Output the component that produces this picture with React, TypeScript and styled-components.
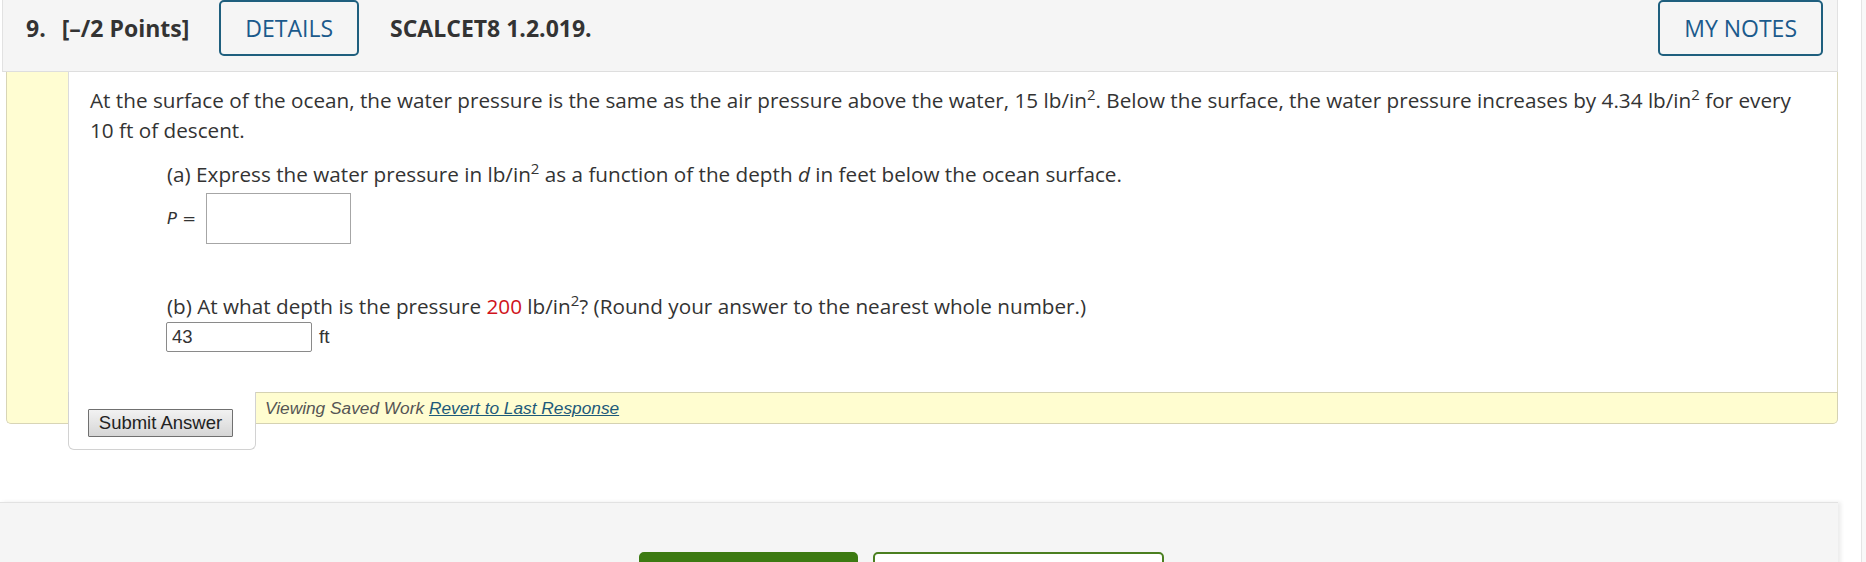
import React from "react";
import styled, { createGlobalStyle } from "styled-components";

const GlobalStyle = createGlobalStyle`
  html, body { margin: 0; padding: 0; background: #ffffff; }
  body {
    font-family: "Open Sans", "Liberation Sans", sans-serif;
    color: #333333;
    overflow: hidden;
  }
`;

const Page = styled.div`
  display: flex;
  width: 1866px;
  height: 562px;
  overflow: hidden;
`;

const Main = styled.div`
  width: 1838px;
  flex-shrink: 0;
  display: flex;
  flex-direction: column;
`;

const Rail = styled.div`
  flex: 1;
  display: flex;
  padding-left: 23px;
`;

const RailTrack = styled.div`
  flex: 1;
  border-left: 1px solid #e4e4e4;
  background: #f8f8f8;
`;

const Header = styled.header`
  flex-shrink: 0;
  margin-left: 2px;
  height: 72px;
  box-sizing: border-box;
  display: flex;
  align-items: flex-start;
  padding: 0 14px 0 23px;
  background: #f5f5f5;
  border-left: 1px solid #e2e2e2;
  border-right: 1px solid #e2e2e2;
  border-bottom: 1px solid #dedede;
`;

const HeaderText = styled.span<{ $gap?: number }>`
  font-size: 23px;
  font-weight: 700;
  line-height: 56px;
  color: #333333;
  margin-left: ${(p) => p.$gap ?? 0}px;
  white-space: nowrap;
`;

const OutlineButton = styled.button<{ $gap?: number }>`
  height: 56px;
  box-sizing: border-box;
  margin-left: ${(p) => p.$gap ?? 0}px;
  padding: 0 24px;
  border: 2px solid #1f5f7e;
  border-radius: 5px;
  background: transparent;
  color: #1b5a8c;
  font-family: "Open Sans", "Liberation Sans", sans-serif;
  font-size: 23px;
  font-weight: 400;
  cursor: pointer;
`;

const Spacer = styled.div`
  flex: 1;
`;

const QuestionBox = styled.section`
  flex-shrink: 0;
  margin-left: 6px;
  display: flex;
`;

const Gutter = styled.div`
  width: 62px;
  box-sizing: border-box;
  background: #fffdd2;
  border-left: 1px solid #d8d5b6;
  border-bottom: 1px solid #d8d5b6;
  border-bottom-left-radius: 5px;
`;

const ContentCol = styled.div`
  flex: 1;
  display: flex;
  flex-direction: column;
`;

const Body = styled.div`
  background: #ffffff;
  border-left: 1px solid #dcdcdc;
  border-right: 1px solid #dcd9bd;
  padding: 13px 36px 40px 21px;
`;

const Para = styled.p`
  margin: 0;
  font-size: 20.7px;
  line-height: 30px;
  color: #333333;
`;

const Part = styled.div<{ $gap: number }>`
  margin-left: 77px;
  margin-top: ${(p) => p.$gap}px;
`;

const Sup = styled.sup`
  font-size: 15px;
  line-height: 0;
  vertical-align: 8px;
`;

const Red = styled.span`
  color: #d0131c;
`;

const AnswerRow = styled.div<{ $gap: number }>`
  display: flex;
  align-items: center;
  margin-top: ${(p) => p.$gap}px;
`;

const VarLabel = styled.span`
  font-family: "DejaVu Sans", "Liberation Sans", sans-serif;
  font-size: 16.5px;
  color: #333333;
  width: 39px;
`;

const MathBox = styled.div`
  width: 145px;
  height: 51px;
  box-sizing: border-box;
  border: 1px solid #a6a6a6;
  background: #ffffff;
`;

const TextInput = styled.input`
  width: 146px;
  height: 30px;
  box-sizing: border-box;
  border: 1px solid #8a8a8a;
  border-radius: 2px;
  padding: 0 5px;
  margin: 0 0 0 -1px;
  font-family: "Liberation Sans", Arial, sans-serif;
  font-size: 18.5px;
  color: #333333;
  background: #ffffff;
  outline: none;
`;

const Unit = styled.span`
  margin-left: 7px;
  font-family: "Liberation Sans", Arial, sans-serif;
  font-size: 19px;
  color: #333333;
`;

const FooterRow = styled.div`
  display: flex;
  height: 32px;
`;

const SubmitTab = styled.div`
  width: 188px;
  height: 58px;
  flex-shrink: 0;
  box-sizing: border-box;
  align-self: flex-start;
  background: #ffffff;
  border-left: 1px solid #d2d2d2;
  border-right: 1px solid #d2d2d2;
  border-bottom: 1px solid #d2d2d2;
  border-bottom-left-radius: 6px;
  border-bottom-right-radius: 6px;
  padding: 17px 0 0 19px;
  position: relative;
  z-index: 1;
`;

const SubmitButton = styled.button`
  width: 145px;
  height: 28px;
  box-sizing: border-box;
  padding: 0;
  border: 1px solid #707070;
  border-radius: 1px;
  background: linear-gradient(#f2f2f2, #d6d6d6);
  font-family: "Liberation Sans", Arial, sans-serif;
  font-size: 18.5px;
  color: #222222;
  cursor: pointer;
`;

const SavedBar = styled.div`
  flex: 1;
  height: 32px;
  box-sizing: border-box;
  background: #fffdd0;
  border-top: 1px solid #d5d2b2;
  border-bottom: 1px solid #d5d2b2;
  border-right: 1px solid #d5d2b2;
  border-bottom-right-radius: 5px;
  padding-left: 9px;
  font-family: "Liberation Sans", Arial, sans-serif;
  font-style: italic;
  font-size: 17.3px;
  line-height: 30px;
  color: #555555;
`;

const RevertLink = styled.a`
  color: #1d5a7a;
  text-decoration: underline;
  cursor: pointer;
`;

const ActionPanel = styled.div`
  flex-shrink: 0;
  margin-top: 78px;
  height: 120px;
  display: flex;
  gap: 15px;
  align-items: flex-start;
  padding: 49px 0 0 639px;
  background: #f5f5f5;
  border-top: 1px solid #e2e2e2;
  box-shadow: 3px 0 4px rgba(0, 0, 0, 0.08);
`;

const ActionButton = styled.button<{ $primary?: boolean; $w: number }>`
  width: ${(p) => p.$w}px;
  height: 54px;
  box-sizing: border-box;
  border-radius: 5px;
  border: 2px solid ${(p) => (p.$primary ? "#3c7a12" : "#4b7f20")};
  background: ${(p) => (p.$primary ? "#3c7a12" : "#ffffff")};
`;

export default function App() {
  return (
    <>
      <GlobalStyle />
      <Page>
        <Main>
          <Header>
            <HeaderText>9.</HeaderText>
            <HeaderText $gap={16}>[–/2 Points]</HeaderText>
            <OutlineButton $gap={30}>DETAILS</OutlineButton>
            <HeaderText $gap={31}>SCALCET8 1.2.019.</HeaderText>
            <Spacer />
            <OutlineButton>MY NOTES</OutlineButton>
          </Header>

          <QuestionBox>
            <Gutter />
            <ContentCol>
              <Body>
                <Para>
                  At the surface of the ocean, the water pressure is the same as the air pressure above the
                  water, 15 lb/in<Sup>2</Sup>. Below the surface, the water pressure increases by 4.34 lb/in
                  <Sup>2</Sup> for every 10 ft of descent.
                </Para>
                <Part $gap={14}>
                  <Para>
                    (a) Express the water pressure in lb/in<Sup>2</Sup> as a function of the depth <i>d</i> in
                    feet below the ocean surface.
                  </Para>
                  <AnswerRow $gap={4}>
                    <VarLabel>
                      <i>P</i> =
                    </VarLabel>
                    <MathBox />
                  </AnswerRow>
                </Part>
                <Part $gap={47}>
                  <Para>
                    (b) At what depth is the pressure <Red>200</Red> lb/in<Sup>2</Sup>? (Round your answer to
                    the nearest whole number.)
                  </Para>
                  <AnswerRow $gap={1}>
                    <TextInput defaultValue="43" />
                    <Unit>ft</Unit>
                  </AnswerRow>
                </Part>
              </Body>
              <FooterRow>
                <SubmitTab>
                  <SubmitButton>Submit Answer</SubmitButton>
                </SubmitTab>
                <SavedBar>
                  Viewing Saved Work <RevertLink>Revert to Last Response</RevertLink>
                </SavedBar>
              </FooterRow>
            </ContentCol>
          </QuestionBox>

          <ActionPanel>
            <ActionButton $primary $w={219} aria-label="Submit Assignment" />
            <ActionButton $w={291} aria-label="Save Assignment Progress" />
          </ActionPanel>
        </Main>
        <Rail>
          <RailTrack />
        </Rail>
      </Page>
    </>
  );
}
